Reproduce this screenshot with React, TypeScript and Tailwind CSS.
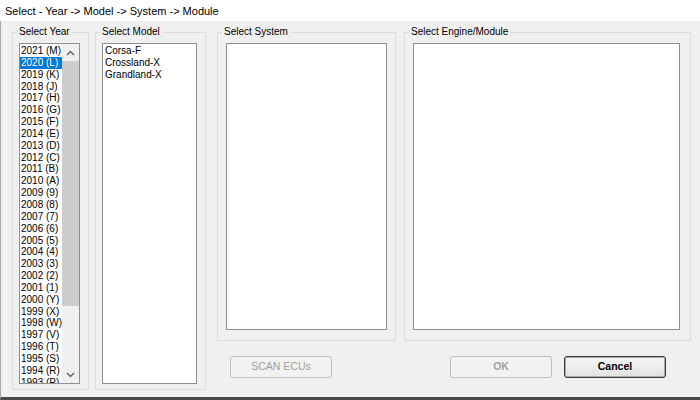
import React from 'react'

const years = [
  '2021 (M)', '2020 (L)', '2019 (K)', '2018 (J)', '2017 (H)', '2016 (G)', '2015 (F)',
  '2014 (E)', '2013 (D)', '2012 (C)', '2011 (B)', '2010 (A)', '2009 (9)', '2008 (8)',
  '2007 (7)', '2006 (6)', '2005 (5)', '2004 (4)', '2003 (3)', '2002 (2)', '2001 (1)',
  '2000 (Y)', '1999 (X)', '1998 (W)', '1997 (V)', '1996 (T)', '1995 (S)', '1994 (R)',
  '1993 (P)',
]

const models = ['Corsa-F', 'Crossland-X', 'Grandland-X']

function Chevron({ up }: { up?: boolean }) {
  return (
    <svg width="9" height="6" viewBox="0 0 9 6" className={up ? '' : 'rotate-180'}>
      <path d="M1 5 L4.5 1.5 L8 5" fill="none" stroke="#606060" strokeWidth="1.4" />
    </svg>
  )
}

function Group({ label, className, children }: { label: string; className: string; children: React.ReactNode }) {
  return (
    <fieldset className={`border border-[#dcdcdc] shrink-0 ${className}`}>
      <legend className="ml-[4px] px-[2px] text-[10px] leading-[12px] text-black">{label}</legend>
      {children}
    </fieldset>
  )
}

function Button({ label, disabled, bold }: { label: string; disabled?: boolean; bold?: boolean }) {
  return (
    <button
      className={
        disabled
          ? `w-[102px] h-[22px] rounded-[3px] border border-[#bfbfbf] bg-[#f2f2f2] text-[10.5px] text-[#a0a0a0] ${bold ? 'font-bold' : ''}`
          : 'w-[102px] h-[22px] rounded-[3px] border border-[#3a3a3a] bg-gradient-to-b from-[#f7f7f7] to-[#e2e2e2] shadow-[inset_0_0_0_1px_#a8a8a8] text-[10.5px] font-bold text-black'
      }
    >
      {label}
    </button>
  )
}

export default function App() {
  return (
    <div className="w-[700px] h-[400px] overflow-hidden bg-white" style={{ fontFamily: '"Liberation Sans", Arial, sans-serif' }}>
      {/* Title bar */}
      <div className="h-[21px] flex items-center pl-[5px] pt-[2px] bg-white text-[11px] text-black">
        Select - Year -&gt; Model -&gt; System -&gt; Module
      </div>

      {/* Dialog body */}
      <div className="h-[379px] bg-[#f0f0f0] border-l border-[#a9a9a9] border-b-[3px] border-b-[#4a4a4a] pl-[11px] pt-[5px] flex gap-[6px]">
        {/* Year */}
        <Group label="Select Year" className="w-[77px] h-[364px]">
          <div className="pl-[6px] pt-[5px]">
            <div className="w-[61px] h-[341px] border border-[#8e8f8f] bg-white flex">
              <div className="w-[42px] pt-[1px] overflow-hidden text-[10px] text-black">
                {years.map((y, i) => (
                  <div
                    key={y}
                    className={`h-[11.85px] leading-[11.85px] pl-[1px] whitespace-nowrap ${i === 1 ? 'bg-[#0078d7] text-white' : ''}`}
                  >
                    {y}
                  </div>
                ))}
              </div>
              <div className="w-[17px] flex flex-col bg-[#f0f0f0]">
                <div className="h-[17px] flex items-center justify-center">
                  <Chevron up />
                </div>
                <div className="h-[245px] bg-[#cdcdcd]" />
                <div className="flex-1" />
                <div className="h-[17px] flex items-center justify-center">
                  <Chevron />
                </div>
              </div>
            </div>
          </div>
        </Group>

        {/* Model */}
        <Group label="Select Model" className="w-[111px] h-[364px]">
          <div className="pl-[6px] pt-[5px]">
            <div className="w-[95px] h-[341px] border border-[#8e8f8f] bg-white pl-[2px] pt-[1px] text-[10px] text-black">
              {models.map((m) => (
                <div key={m} className="h-[11.85px] leading-[11.85px] whitespace-nowrap">
                  {m}
                </div>
              ))}
            </div>
          </div>
        </Group>

        {/* System / Engine + buttons */}
        <div className="ml-[5px] flex flex-col">
          <div className="flex gap-[8px]">
            <Group label="Select System" className="w-[179px] h-[315px]">
              <div className="pl-[8px] pt-[5px]">
                <div className="w-[161px] h-[287px] border border-[#8e8f8f] bg-white" />
              </div>
            </Group>
            <Group label="Select Engine/Module" className="w-[287px] h-[315px]">
              <div className="pl-[8px] pt-[5px]">
                <div className="w-[267px] h-[287px] border border-[#8e8f8f] bg-white" />
              </div>
            </Group>
          </div>
          <div className="mt-[12px] flex">
            <div className="ml-[13px]">
              <Button label="SCAN ECUs" disabled />
            </div>
            <div className="ml-[118px]">
              <Button label="OK" disabled bold />
            </div>
            <div className="ml-[12px]">
              <Button label="Cancel" />
            </div>
          </div>
        </div>
      </div>
    </div>
  )
}
